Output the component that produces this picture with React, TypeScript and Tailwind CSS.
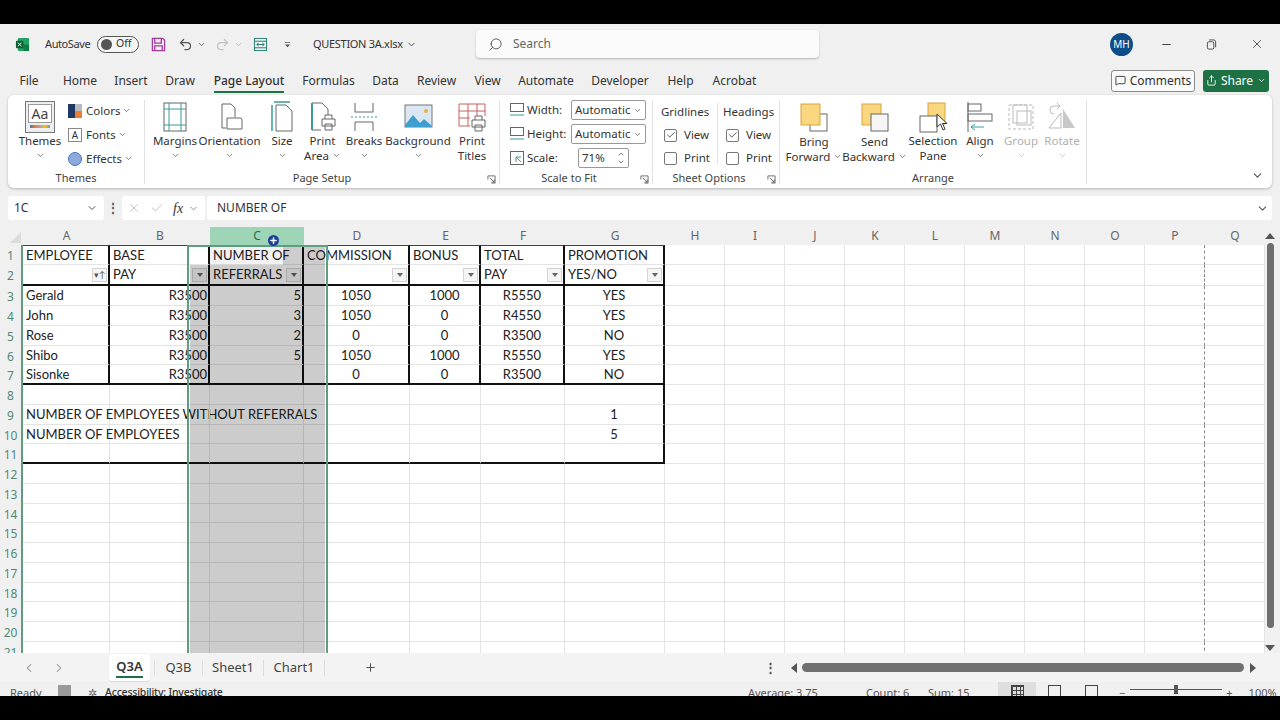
import type { ReactNode } from 'react';
import { ChevronDown, ChevronLeft, ChevronRight, Minus, Plus, Search, Undo2, Redo2, X, Check, MessageSquare, Share } from 'lucide-react';

const UI = "font-['Noto_Sans',sans-serif]";
const GRID_COLS = 'grid grid-cols-[23px_87px_100px_94px_106px_71px_84px_100px_repeat(10,60px)]';
const COLS = ['A', 'B', 'C', 'D', 'E', 'F', 'G', 'H', 'I', 'J', 'K', 'L', 'M', 'N', 'O', 'P', 'Q'];

type Cell = { t?: string; align?: 'l' | 'r' | 'c'; filter?: boolean; sort?: boolean };

const SHEET: Record<number, Cell[]> = {
  1: [{ t: 'EMPLOYEE' }, { t: 'BASE' }, { t: 'NUMBER OF' }, { t: 'COMMISSION' }, { t: 'BONUS' }, { t: 'TOTAL' }, { t: 'PROMOTION' }],
  2: [{ sort: true }, { t: 'PAY', filter: true }, { t: 'REFERRALS', filter: true }, { filter: true }, { filter: true }, { t: 'PAY', filter: true }, { t: 'YES/NO', filter: true }],
  3: [{ t: 'Gerald' }, { t: 'R3500', align: 'r' }, { t: '5', align: 'r' }, { t: '1050', align: 'c' }, { t: '1000', align: 'c' }, { t: 'R5550', align: 'c' }, { t: 'YES', align: 'c' }],
  4: [{ t: 'John' }, { t: 'R3500', align: 'r' }, { t: '3', align: 'r' }, { t: '1050', align: 'c' }, { t: '0', align: 'c' }, { t: 'R4550', align: 'c' }, { t: 'YES', align: 'c' }],
  5: [{ t: 'Rose' }, { t: 'R3500', align: 'r' }, { t: '2', align: 'r' }, { t: '0', align: 'c' }, { t: '0', align: 'c' }, { t: 'R3500', align: 'c' }, { t: 'NO', align: 'c' }],
  6: [{ t: 'Shibo' }, { t: 'R3500', align: 'r' }, { t: '5', align: 'r' }, { t: '1050', align: 'c' }, { t: '1000', align: 'c' }, { t: 'R5550', align: 'c' }, { t: 'YES', align: 'c' }],
  7: [{ t: 'Sisonke' }, { t: 'R3500', align: 'r' }, {}, { t: '0', align: 'c' }, { t: '0', align: 'c' }, { t: 'R3500', align: 'c' }, { t: 'NO', align: 'c' }],
  9: [{ t: 'NUMBER OF EMPLOYEES WITHOUT REFERRALS' }, {}, {}, {}, {}, {}, { t: '1', align: 'c' }],
  10: [{ t: 'NUMBER OF EMPLOYEES' }, {}, {}, {}, {}, {}, { t: '5', align: 'c' }],
};

function Chev({ className = '' }: { className?: string }) {
  return <ChevronDown className={`w-[9px] h-[9px] text-[#555] shrink-0 ${className}`} strokeWidth={2} />;
}

function Launcher() {
  return (
    <svg viewBox="0 0 10 10" className="w-[9px] h-[9px] text-[#666]" fill="none" stroke="currentColor">
      <path d="M1 5V1h8v8H5M3 3l5 5M8 5v3H5" />
    </svg>
  );
}

function LargeBtn({ w, icon, lines, chev = 'below', off }: { w: string; icon: ReactNode; lines: string[]; chev?: 'below' | 'inline' | 'none'; off?: boolean }) {
  return (
    <div className={`${w} flex flex-col items-center text-[11.5px] leading-[15px] ${off ? 'text-[#b0b0b0]' : 'text-[#333]'}`}>
      <div className="h-[33px] flex items-center justify-center">{icon}</div>
      {lines.map((l, i) => (
        <div key={l} className="flex items-center gap-[3px] whitespace-nowrap">
          {l}
          {chev === 'inline' && i === lines.length - 1 && <Chev />}
        </div>
      ))}
      {chev === 'below' && lines.length === 1 && <div className="h-[15px] flex items-center"><Chev className={off ? 'opacity-40' : ''} /></div>}
    </div>
  );
}

function Group({ w, label, labelClass = '', launcher, children }: { w: string; label: string; labelClass?: string; launcher?: boolean; children: ReactNode }) {
  return (
    <div className={`${w} flex flex-col relative border-r border-[#e2e2e2] mt-[5px] mb-[4px]`}>
      <div className="h-[73px] shrink-0 flex">{children}</div>
      <div className={`h-[11px] shrink-0 flex items-center justify-center text-[11px] text-[#444] ${labelClass}`}>{label}</div>
      {launcher && <div className="absolute right-[3px] bottom-0"><Launcher /></div>}
    </div>
  );
}

function Box({ on }: { on?: boolean }) {
  return (
    <div className="w-[13px] h-[13px] border border-[#777] rounded-[2px] flex items-center justify-center bg-white">
      {on && <Check className="w-[10px] h-[10px] text-[#333]" strokeWidth={2} />}
    </div>
  );
}

function Filter({ sort }: { sort?: boolean }) {
  return (
    <div className="absolute right-[1px] top-[3px] w-[15px] h-[14px] bg-[#f5f5f5] border border-[#d4d4d4] flex items-center justify-center">
      {sort ? (
        <span className="text-[9px] leading-none text-[#555]">▾↑</span>
      ) : (
        <div className="w-0 h-0 border-x-[3px] border-x-transparent border-t-[4px] border-t-[#666]" />
      )}
    </div>
  );
}

function TitleBar() {
  return (
    <div className="h-[40px] flex items-center text-[12px] text-[#333] relative">
      <svg viewBox="0 0 16 16" className="w-[15px] h-[15px] ml-[15px]">
        <rect x="3" y="1" width="12" height="14" rx="1.5" fill="#21a366" />
        <rect x="9" y="8" width="6" height="7" fill="#107c41" />
        <rect x="1" y="4" width="8" height="8" rx="1" fill="#0b5c31" />
        <path d="M3 6l4 4M7 6l-4 4" stroke="#fff" strokeWidth="1" />
      </svg>
      <span className="ml-[15px] w-[45px] text-[11px] tracking-[-0.4px] whitespace-nowrap">AutoSave</span>
      <div className="ml-[7px] w-[42px] h-[17px] rounded-full border border-[#555] flex items-center pl-[3px] gap-[4px] bg-white/40">
        <div className="w-[11px] h-[11px] rounded-full bg-[#555]" />
        <span className="text-[10.5px]">Off</span>
      </div>
      <svg viewBox="0 0 16 16" className="w-[15px] h-[15px] ml-[12px]" fill="none" stroke="#a3389e" strokeWidth="1.4">
        <path d="M1.5 1.5h11l2 2v11h-13zM4 1.5v5h7v-5M4 14.5v-5h8v5" />
      </svg>
      <Undo2 className="w-[15px] h-[15px] ml-[12px] text-[#555]" />
      <Chev className="ml-[4px]" />
      <Redo2 className="w-[15px] h-[15px] ml-[9px] text-[#c0c0c0]" />
      <Chev className="ml-[4px] opacity-40" />
      <svg viewBox="0 0 16 16" className="w-[15px] h-[15px] ml-[10px]" fill="none" stroke="#1f7a6d">
        <rect x="1.5" y="1.5" width="13" height="13" />
        <path d="M1.5 4.5h13M1.5 11.5h13M4 8h8M4 8l2-1.500M4 8l2 1.500M12 8l-2-1.500M12 8l-2 1.500" />
      </svg>
      <svg viewBox="0 0 8 8" className="w-[7px] h-[7px] ml-[16px] text-[#555]" fill="currentColor"><path d="M1 1h6v1H1zM1 4h6L4 7z" /></svg>
      <span className="ml-[22px] w-[90px] text-[11px] tracking-[-0.3px] whitespace-nowrap">QUESTION 3A.xlsx</span>
      <ChevronDown className="w-[11px] h-[11px] ml-[3px] text-[#444]" />
      <div className="ml-[59px] w-[343px] h-[28px] bg-[#fafafa] rounded-[4px] shadow-[0_1px_2px_rgba(0,0,0,.25)] flex items-center pl-[12px] gap-[10px] text-[#666]">
        <Search className="w-[15px] h-[15px] -scale-x-100 text-[#555]" strokeWidth={1.5} />
        <span className="text-[12px]">Search</span>
      </div>
      <div className="ml-auto flex items-center">
        <div className="w-[23px] h-[23px] rounded-full bg-[#0f4c8a] text-white text-[10px] flex items-center justify-center">MH</div>
        <Minus className="w-[13px] h-[13px] ml-[27px] text-[#444]" />
        <svg viewBox="0 0 12 12" className="w-[11px] h-[11px] ml-[33px] mr-[33px]" fill="none" stroke="#444"><rect x="1.5" y="3" width="7" height="8" rx="1.5" /><path d="M3.5 1h5a2 2 0 0 1 2 2v6" /></svg>
        <X className="w-[14px] h-[14px] mr-[16px] text-[#444]" strokeWidth={1.5} />
      </div>
    </div>
  );
}

const TABS = [
  { t: 'File', c: 'w-[18px] mr-[6px]' },
  { t: 'Home', c: 'w-[32px]' },
  { t: 'Insert', c: 'w-[30px]' },
  { t: 'Draw', c: 'w-[28px]' },
  { t: 'Page Layout', c: 'w-[70px] font-medium' },
  { t: 'Formulas', c: 'w-[49px]' },
  { t: 'Data', c: 'w-[25px]' },
  { t: 'Review', c: 'w-[37px]' },
  { t: 'View', c: 'w-[25px]' },
  { t: 'Automate', c: 'w-[52px]' },
  { t: 'Developer', c: 'w-[56px]' },
  { t: 'Help', c: 'w-[25px]' },
  { t: 'Acrobat', c: 'w-[43px]' },
];

function TabRow() {
  return (
    <div className="h-[31px] flex items-center pt-[2px] pl-[20px] pr-[11px] text-[12px] text-[#333] gap-[20px]">
      {TABS.map((x) => (
        <div key={x.t} className={`${x.c} relative text-center whitespace-nowrap flex justify-center`}>
          {x.t}
          {x.t === 'Page Layout' && <div className="absolute left-0 right-0 -bottom-[3px] h-[2px] bg-[#1e7145]" />}
        </div>
      ))}
      <div className="ml-auto flex items-center gap-[8px]">
        <div className="w-[84px] h-[22px] border border-[#8a8a8a] rounded-[3px] bg-[#fafafa] flex items-center justify-center gap-[4px] text-[12px]">
          <MessageSquare className="w-[11px] h-[11px]" />
          Comments
        </div>
        <div className="w-[66px] h-[22px] rounded-[3px] bg-[#1e7145] text-white flex items-center justify-center gap-[4px] text-[12px]">
          <Share className="w-[11px] h-[11px]" />
          Share
          <ChevronDown className="w-[9px] h-[9px]" />
        </div>
      </div>
    </div>
  );
}

const PageIcon = ({ children }: { children: ReactNode }) => (
  <svg viewBox="0 0 32 32" className="w-[32px] h-[32px]" fill="none" stroke="#666">{children}</svg>
);

function Ribbon() {
  return (
    <div className="h-[93px] mx-[8px] bg-white rounded-[6px] shadow-[0_1px_3px_rgba(0,0,0,.25)] flex relative">
      <Group w="w-[137px]" label="Themes">
        <div className="w-[60px] pl-[8px]">
          <LargeBtn
            w="w-[48px]"
            lines={['Themes']}
            icon={
              <div className="w-[30px] h-[32px] border border-[#777] bg-[#eee] flex flex-col items-center pt-[2px]">
                <div className="w-[24px] h-[19px] border border-[#999] bg-white text-[14px] leading-[17px] text-center text-[#444]">Aa</div>
                <div className="w-[20px] h-[3px] mt-[2px] bg-[linear-gradient(90deg,#4472c4,#ed7d31,#a5a5a5,#ffc000,#5b9bd5)]" />
              </div>
            }
          />
        </div>
        <div className="flex flex-col gap-[5px] pt-[1px] text-[11.5px] text-[#333] leading-[19px]">
          <div className="flex items-center gap-[4px]">
            <div className="w-[14px] h-[14px] grid grid-cols-2"><div className="bg-[#1f3864]" /><div className="bg-[#bbb]" /><div className="bg-[#1f3864]" /><div className="bg-[#ed7d31]" /></div>
            Colors <Chev className="-ml-[2px]" />
          </div>
          <div className="flex items-center gap-[4px]">
            <div className="w-[14px] h-[14px] border border-[#888] text-[10px] leading-[12px] text-center">A</div>
            Fonts <Chev className="-ml-[2px]" />
          </div>
          <div className="flex items-center gap-[4px]">
            <div className="w-[14px] h-[14px] rounded-full bg-[#8eaadb] border border-[#4472c4]" />
            Effects <Chev className="-ml-[2px]" />
          </div>
        </div>
      </Group>

      <Group w="w-[355px]" label="Page Setup" launcher>
        <div className="flex pl-[7px]">
          <LargeBtn w="w-[46px]" lines={['Margins']} icon={<PageIcon><rect x="5" y="2" width="22" height="28" /><path d="M5 8h22M5 24h22M10 2v28M22 2v28" stroke="#3b9a9a" /></PageIcon>} />
          <LargeBtn w="w-[63px]" lines={['Orientation']} icon={<PageIcon><path d="M8 3h9l4 4v9M8 3v24h4" /><path d="M13 17h13a2 2 0 0 1 2 2v9H13z" fill="#fff" /></PageIcon>} />
          <LargeBtn w="w-[42px]" lines={['Size']} icon={<PageIcon><path d="M10 4h10l6 6v20H10z" /><path d="M6 4v26M8 1H24" stroke="#3b9a9a" strokeWidth="1.5" /></PageIcon>} />
          <LargeBtn w="w-[39px]" lines={['Print', 'Area']} chev="inline" icon={<PageIcon><path d="M5 2h10l6 6v8M5 2v27h9" /><path d="M5 2v27" stroke="#3b9a9a" strokeWidth="2" /><path d="M18 18v-4h7v4M15 18h13v7h-13zM18 23h7v6h-7z" fill="#fff" /></PageIcon>} />
          <LargeBtn w="w-[44px]" lines={['Breaks']} icon={<PageIcon><path d="M7 2v9h18V2M7 30V21h18v9" /><path d="M3 16h26" stroke="#3b9a9a" strokeDasharray="2 2" /></PageIcon>} />
          <LargeBtn w="w-[64px]" lines={['Background']} icon={
            <svg viewBox="0 0 32 32" className="w-[32px] h-[32px]">
              <rect x="3" y="4" width="27" height="22" fill="#dbe8f3" stroke="#777" />
              <path d="M3 24l8-10 7 8 4-4 8 7v1H3z" fill="#3f9fd0" />
              <circle cx="24" cy="10" r="2" fill="#e8b23c" />
            </svg>
          } />
          <LargeBtn w="w-[44px]" lines={['Print', 'Titles']} chev="none" icon={<PageIcon><path d="M3 3h26v12M3 3v22h11M3 10h26M12 3v22M21 3v12M3 17h11" stroke="#c9605f" /><path d="M19 19v-4h7v4M16 19h13v7h-13zM19 24h7v6h-7z" fill="#fff" /></PageIcon>} />
        </div>
      </Group>

      <Group w="w-[153px]" label="Scale to Fit" labelClass="pr-[14px]" launcher>
        <div className="flex flex-col gap-[4px] text-[11.5px] text-[#333] pl-[9px]">
          {['Width:', 'Height:'].map((l) => (
            <div key={l} className="flex items-center h-[20px]">
              <svg viewBox="0 0 16 16" className="w-[16px] h-[16px]" fill="none" stroke="#666"><rect x="1.5" y="1.5" width="13" height="8" /><path d="M1 13h14" stroke="#3b9a9a" /></svg>
              <span className="w-[44px] ml-[2px]">{l}</span>
              <div className="w-[75px] h-[20px] border border-[#999] rounded-[2px] flex items-center justify-between px-[3px]">
                Automatic
                <Chev />
              </div>
            </div>
          ))}
          <div className="flex items-center h-[20px]">
            <svg viewBox="0 0 16 16" className="w-[16px] h-[16px]" fill="none" stroke="#666"><rect x="1.5" y="1.5" width="13" height="13" /><path d="M7 12V7h5M7 7l5 5" stroke="#3b9a9a" /></svg>
            <span className="w-[51px] ml-[2px]">Scale:</span>
            <div className="w-[51px] h-[20px] border border-[#999] rounded-[2px] flex items-center justify-between px-[3px]">
              71%
              <div className="flex flex-col text-[#444]">
                <ChevronDown className="w-[8px] h-[8px] rotate-180" />
                <ChevronDown className="w-[8px] h-[8px]" />
              </div>
            </div>
          </div>
        </div>
      </Group>

      <Group w="w-[127px]" label="Sheet Options" labelClass="pr-[14px]" launcher>
        <div className="flex pl-[8px] text-[11.5px] text-[#333] pt-[3px] h-[65px]">
          <div className="w-[56px] flex flex-col gap-[5px] leading-[18px]">
            <span>Gridlines</span>
            <div className="flex items-center gap-[7px] pl-[3px]"><Box on />View</div>
            <div className="flex items-center gap-[7px] pl-[3px]"><Box />Print</div>
          </div>
          <div className="w-[60px] pl-[5px] border-l border-[#e2e2e2] flex flex-col gap-[5px] leading-[18px]">
            <span>Headings</span>
            <div className="flex items-center gap-[7px] pl-[3px]"><Box on />View</div>
            <div className="flex items-center gap-[7px] pl-[3px]"><Box />Print</div>
          </div>
        </div>
      </Group>

      <Group w="w-[307px]" label="Arrange">
        <div className="flex pl-[4px]">
          <LargeBtn w="w-[60px] pt-[1px]" lines={['Bring', 'Forward']} chev="inline" icon={<svg viewBox="0 0 32 32" className="w-[32px] h-[32px]"><rect x="12" y="12" width="17" height="17" fill="#fff" stroke="#666" /><rect x="3" y="2" width="19" height="21" fill="#f9d77e" stroke="#d9a441" /></svg>} />
          <LargeBtn w="w-[61px] pt-[1px]" lines={['Send', 'Backward']} chev="inline" icon={<svg viewBox="0 0 32 32" className="w-[32px] h-[32px]"><rect x="3" y="2" width="19" height="21" fill="#f9d77e" stroke="#d9a441" /><rect x="12" y="12" width="17" height="17" fill="#f5f5f5" stroke="#666" /></svg>} />
          <LargeBtn w="w-[56px]" lines={['Selection', 'Pane']} chev="none" icon={<svg viewBox="0 0 32 32" className="w-[32px] h-[32px]"><rect x="11" y="2" width="17" height="21" fill="#f9d77e" stroke="#d9a441" /><rect x="3" y="15" width="17" height="16" fill="#fff" stroke="#666" /></svg>} />
          <LargeBtn w="w-[38px]" lines={['Align']} icon={<svg viewBox="0 0 32 32" className="w-[32px] h-[32px]" fill="none" stroke="#666"><path d="M4 1v30" /><rect x="4" y="3" width="13" height="7" /><rect x="4" y="13" width="24" height="7" /><path d="M20 26H7M7 26l4-3M7 26l4 3" stroke="#3b9a9a" /></svg>} />
          <LargeBtn off w="w-[44px]" lines={['Group']} icon={<svg viewBox="0 0 32 32" className="w-[32px] h-[32px]" fill="none" stroke="#bbb"><rect x="4" y="4" width="24" height="24" strokeDasharray="3 2" /><rect x="8" y="4" width="14" height="18" /><rect x="12" y="10" width="14" height="14" /></svg>} />
          <LargeBtn off w="w-[38px]" lines={['Rotate']} icon={<svg viewBox="0 0 32 32" className="w-[32px] h-[32px]"><path d="M3 27L15 12v15z" fill="none" stroke="#bbb" /><path d="M17 8l12 19H17z" fill="#c8c8c8" /><path d="M11 2l3 3-3 3M14 5H8a4 4 0 0 0 0 8" fill="none" stroke="#bbb" /></svg>} />
        </div>
      </Group>

      <ChevronDown className="absolute right-[8px] bottom-[6px] w-[13px] h-[13px] text-[#555]" />
    </div>
  );
}

function FormulaBar() {
  return (
    <div className="h-[24px] mt-[8px] mx-[8px] flex items-center text-[12px] text-[#333]">
      <div className="w-[96px] h-full bg-white rounded-[3px] flex items-center justify-between pl-[6px] pr-[6px]">
        1C
        <ChevronDown className="w-[12px] h-[12px] text-[#555]" />
      </div>
      <div className="w-[18px] text-center text-[#555] font-bold leading-none">⋮</div>
      <div className="w-[83px] h-full bg-white rounded-[3px] flex items-center pl-[5px] text-[#bbb]">
        <X className="w-[14px] h-[14px]" strokeWidth={1.5} />
        <Check className="w-[14px] h-[14px] ml-[9px]" strokeWidth={1.5} />
        <span className="ml-[9px] text-[14px] italic text-[#333] font-['Liberation_Serif',serif]">fx</span>
        <ChevronDown className="w-[11px] h-[11px] ml-[5px] text-[#888]" />
      </div>
      <div className="ml-[2px] flex-1 h-full bg-white rounded-[3px] flex items-center justify-between pl-[10px] pr-[3px]">
        NUMBER OF
        <ChevronDown className="w-[13px] h-[13px] text-[#555]" />
      </div>
    </div>
  );
}

function ColumnHeaders() {
  return (
    <div className={`${GRID_COLS} h-[18px] mt-[7px] text-[12px] text-[#666] text-center leading-[18px]`}>
      <div className="flex items-end justify-end pr-[2px] pb-[2px]">
        <div className="w-0 h-0 border-l-[11px] border-l-transparent border-b-[11px] border-b-[#dcdcdc]" />
      </div>
      {COLS.map((c) => (
        <div key={c} className={c === 'C' ? 'bg-[#9fd5b7] text-[#2f6b4f]' : ''}>{c}</div>
      ))}
    </div>
  );
}

function cellBorders(row: number, col: number) {
  const inTable = col < 7;
  const right =
    inTable && (row <= 7 || (col === 6 && row <= 11))
      ? 'border-r-2 border-r-[#111]'
      : col === 15
        ? 'border-r [border-right-style:dashed] border-r-[#888]'
        : 'border-r border-r-[#e4e4e4]';
  const bottom = inTable && (row === 2 || row === 7 || row === 11) ? 'border-b-2 border-b-[#111]' : 'border-b border-b-[#e4e4e4]';
  const top = inTable && row === 1 ? 'border-t border-t-[#444]' : '';
  return `${right} ${bottom} ${top}`;
}

function SheetBody() {
  const rows = Array.from({ length: 21 }, (_, i) => i + 1);
  return (
    <div className="flex h-[408px]">
      <div className="w-[1265px] relative overflow-hidden bg-white">
        <div className={`${GRID_COLS} grid-rows-[19.75px_21.5px] auto-rows-[19.75px] text-[13px] text-[#222] font-['Lato',sans-serif]`}>
          {rows.map((r) => (
            <div key={r} className="contents">
              <div className={`bg-[#f0f0f0] border-r-2 border-r-[#5f9d80] text-center text-[12px] leading-[21px] text-[#4f8a75] ${UI}`}>{r}</div>
              {COLS.map((_, c) => {
                const cell = SHEET[r]?.[c] ?? {};
                const align = cell.align === 'r' ? 'justify-end pr-[1px]' : cell.align === 'c' ? 'justify-center' : 'justify-start pl-[3px]';
                return (
                  <div key={c} className={`relative flex items-center whitespace-nowrap pt-[1px] ${align} ${cellBorders(r, c)}`}>
                    {cell.t}
                    {(cell.filter || cell.sort) && <Filter sort={cell.sort} />}
                  </div>
                );
              })}
            </div>
          ))}
        </div>
        {/* drag preview of column C */}
        <div className="absolute left-[190px] top-[20px] bottom-0 w-[93px] bg-black/20" />
        <div className="absolute left-[210px] top-0 h-[20px] w-[73px] bg-black/5" />
        <div className="absolute left-[283px] top-0 bottom-0 w-[42px] bg-black/20" />
        <div className="absolute left-[187px] top-0 bottom-0 w-[141px] border-x-2 border-t-2 border-[#5f9d80]" />
      </div>
      <div className="w-[15px] pr-[5px] relative flex flex-col items-center">
        <div className="w-0 h-0 mt-[-12px] border-x-[5px] border-x-transparent border-b-[6px] border-b-[#555]" />
        <div className="w-[7px] h-[385px] mt-[4px] rounded-full bg-[#6e6e6e]" />
        <div className="w-0 h-0 mt-[17px] border-x-[5px] border-x-transparent border-t-[6px] border-t-[#555]" />
      </div>
    </div>
  );
}

function SheetTabs() {
  return (
    <div className="h-[29px] bg-[#f3f3f3] flex items-center text-[13px] text-[#444] relative">
      <ChevronLeft className="w-[14px] h-[14px] ml-[22px] text-[#aaa]" />
      <ChevronRight className="w-[14px] h-[14px] ml-[16px] text-[#aaa]" />
      <div className="ml-[43px] w-[41px] h-[27px] bg-white rounded-[3px] flex flex-col items-center justify-center font-semibold text-[#333] shadow-[0_1px_1px_rgba(0,0,0,.1)]">
        Q3A
        <div className="w-[27px] h-[2px] bg-[#1e7145]" />
      </div>
      <div className="ml-[4px] w-[49px] h-[16px] border-l border-r border-[#ddd] flex items-center justify-center">Q3B</div>
      <div className="w-[61px] h-[16px] border-r border-[#ddd] flex items-center justify-center">Sheet1</div>
      <div className="w-[61px] h-[16px] border-r border-[#ddd] flex items-center justify-center">Chart1</div>
      <Plus className="w-[13px] h-[13px] ml-[39px] text-[#555]" />
      <div className="ml-[387px] text-[#555] font-bold leading-none">⋮</div>
      <div className="ml-[14px] w-0 h-0 border-y-[5px] border-y-transparent border-r-[6px] border-r-[#555]" />
      <div className="ml-[5px] w-[442px] h-[9px] rounded-full bg-[#707070]" />
      <div className="ml-[6px] w-0 h-0 border-y-[5px] border-y-transparent border-l-[6px] border-l-[#555]" />
    </div>
  );
}

function StatusBar() {
  return (
    <div className="h-[14px] overflow-hidden flex items-start text-[11px] text-[#555] pt-[3px] leading-[15px]">
      <span className="ml-[10px] w-[40px]">Ready</span>
      <div className="ml-[8px] w-[13px] h-[14px] bg-[#999]" />
      <span className="ml-[17px] w-[14px] text-[#666]">✲</span>
      <span className="ml-[3px] w-[643px] text-[10.5px] font-medium tracking-[-0.2px] text-[#333]">Accessibility: Investigate</span>
      <span className="w-[118px]">Average: 3.75</span>
      <span className="w-[62px]">Count: 6</span>
      <span className="w-[70px]">Sum: 15</span>
      <div className="w-[38px] h-[20px] -mt-[3px] bg-[#dedede] flex justify-center pt-[3px]">
        <div className="w-[13px] h-[13px] border border-[#444] bg-[linear-gradient(#444_1px,transparent_1px),linear-gradient(90deg,#444_1px,transparent_1px)] bg-[length:4px_4px]" />
      </div>
      <div className="ml-[12px] w-[13px] h-[13px] border border-[#444]" />
      <div className="ml-[24px] w-[13px] h-[13px] border border-[#444]" />
      <span className="ml-[21px]">−</span>
      <div className="ml-[5px] mt-[4px] w-[92px] h-[1px] bg-[#555] relative">
        <div className="absolute left-[44px] -top-[4px] w-[4px] h-[9px] bg-[#555]" />
      </div>
      <span className="ml-[4px]">+</span>
      <span className="ml-[16px]">100%</span>
    </div>
  );
}

export default function App() {
  return (
    <div className={`w-[1280px] h-[720px] bg-black overflow-hidden flex flex-col relative ${UI}`}>
      <div className="h-[24px] shrink-0" />
      <div className="h-[672px] shrink-0 bg-[#f0f0f0] overflow-hidden flex flex-col">
        <TitleBar />
        <TabRow />
        <Ribbon />
        <FormulaBar />
        <ColumnHeaders />
        <SheetBody />
        <SheetTabs />
        <StatusBar />
      </div>
      {/* mouse cursors captured in the recording */}
      <div className="absolute left-[268px] top-[235px] w-[11px] h-[11px] rounded-full bg-[#1d3f9c] flex items-center justify-center">
        <Plus className="w-[9px] h-[9px] text-white" strokeWidth={4} />
      </div>
      <svg viewBox="0 0 12 18" className="absolute left-[936px] top-[113px] w-[12px] h-[18px]">
        <path d="M1 1v13l3.5-3 2.5 6 2-1-2.500-5.500H11z" fill="#fff" stroke="#333" />
      </svg>
    </div>
  );
}
